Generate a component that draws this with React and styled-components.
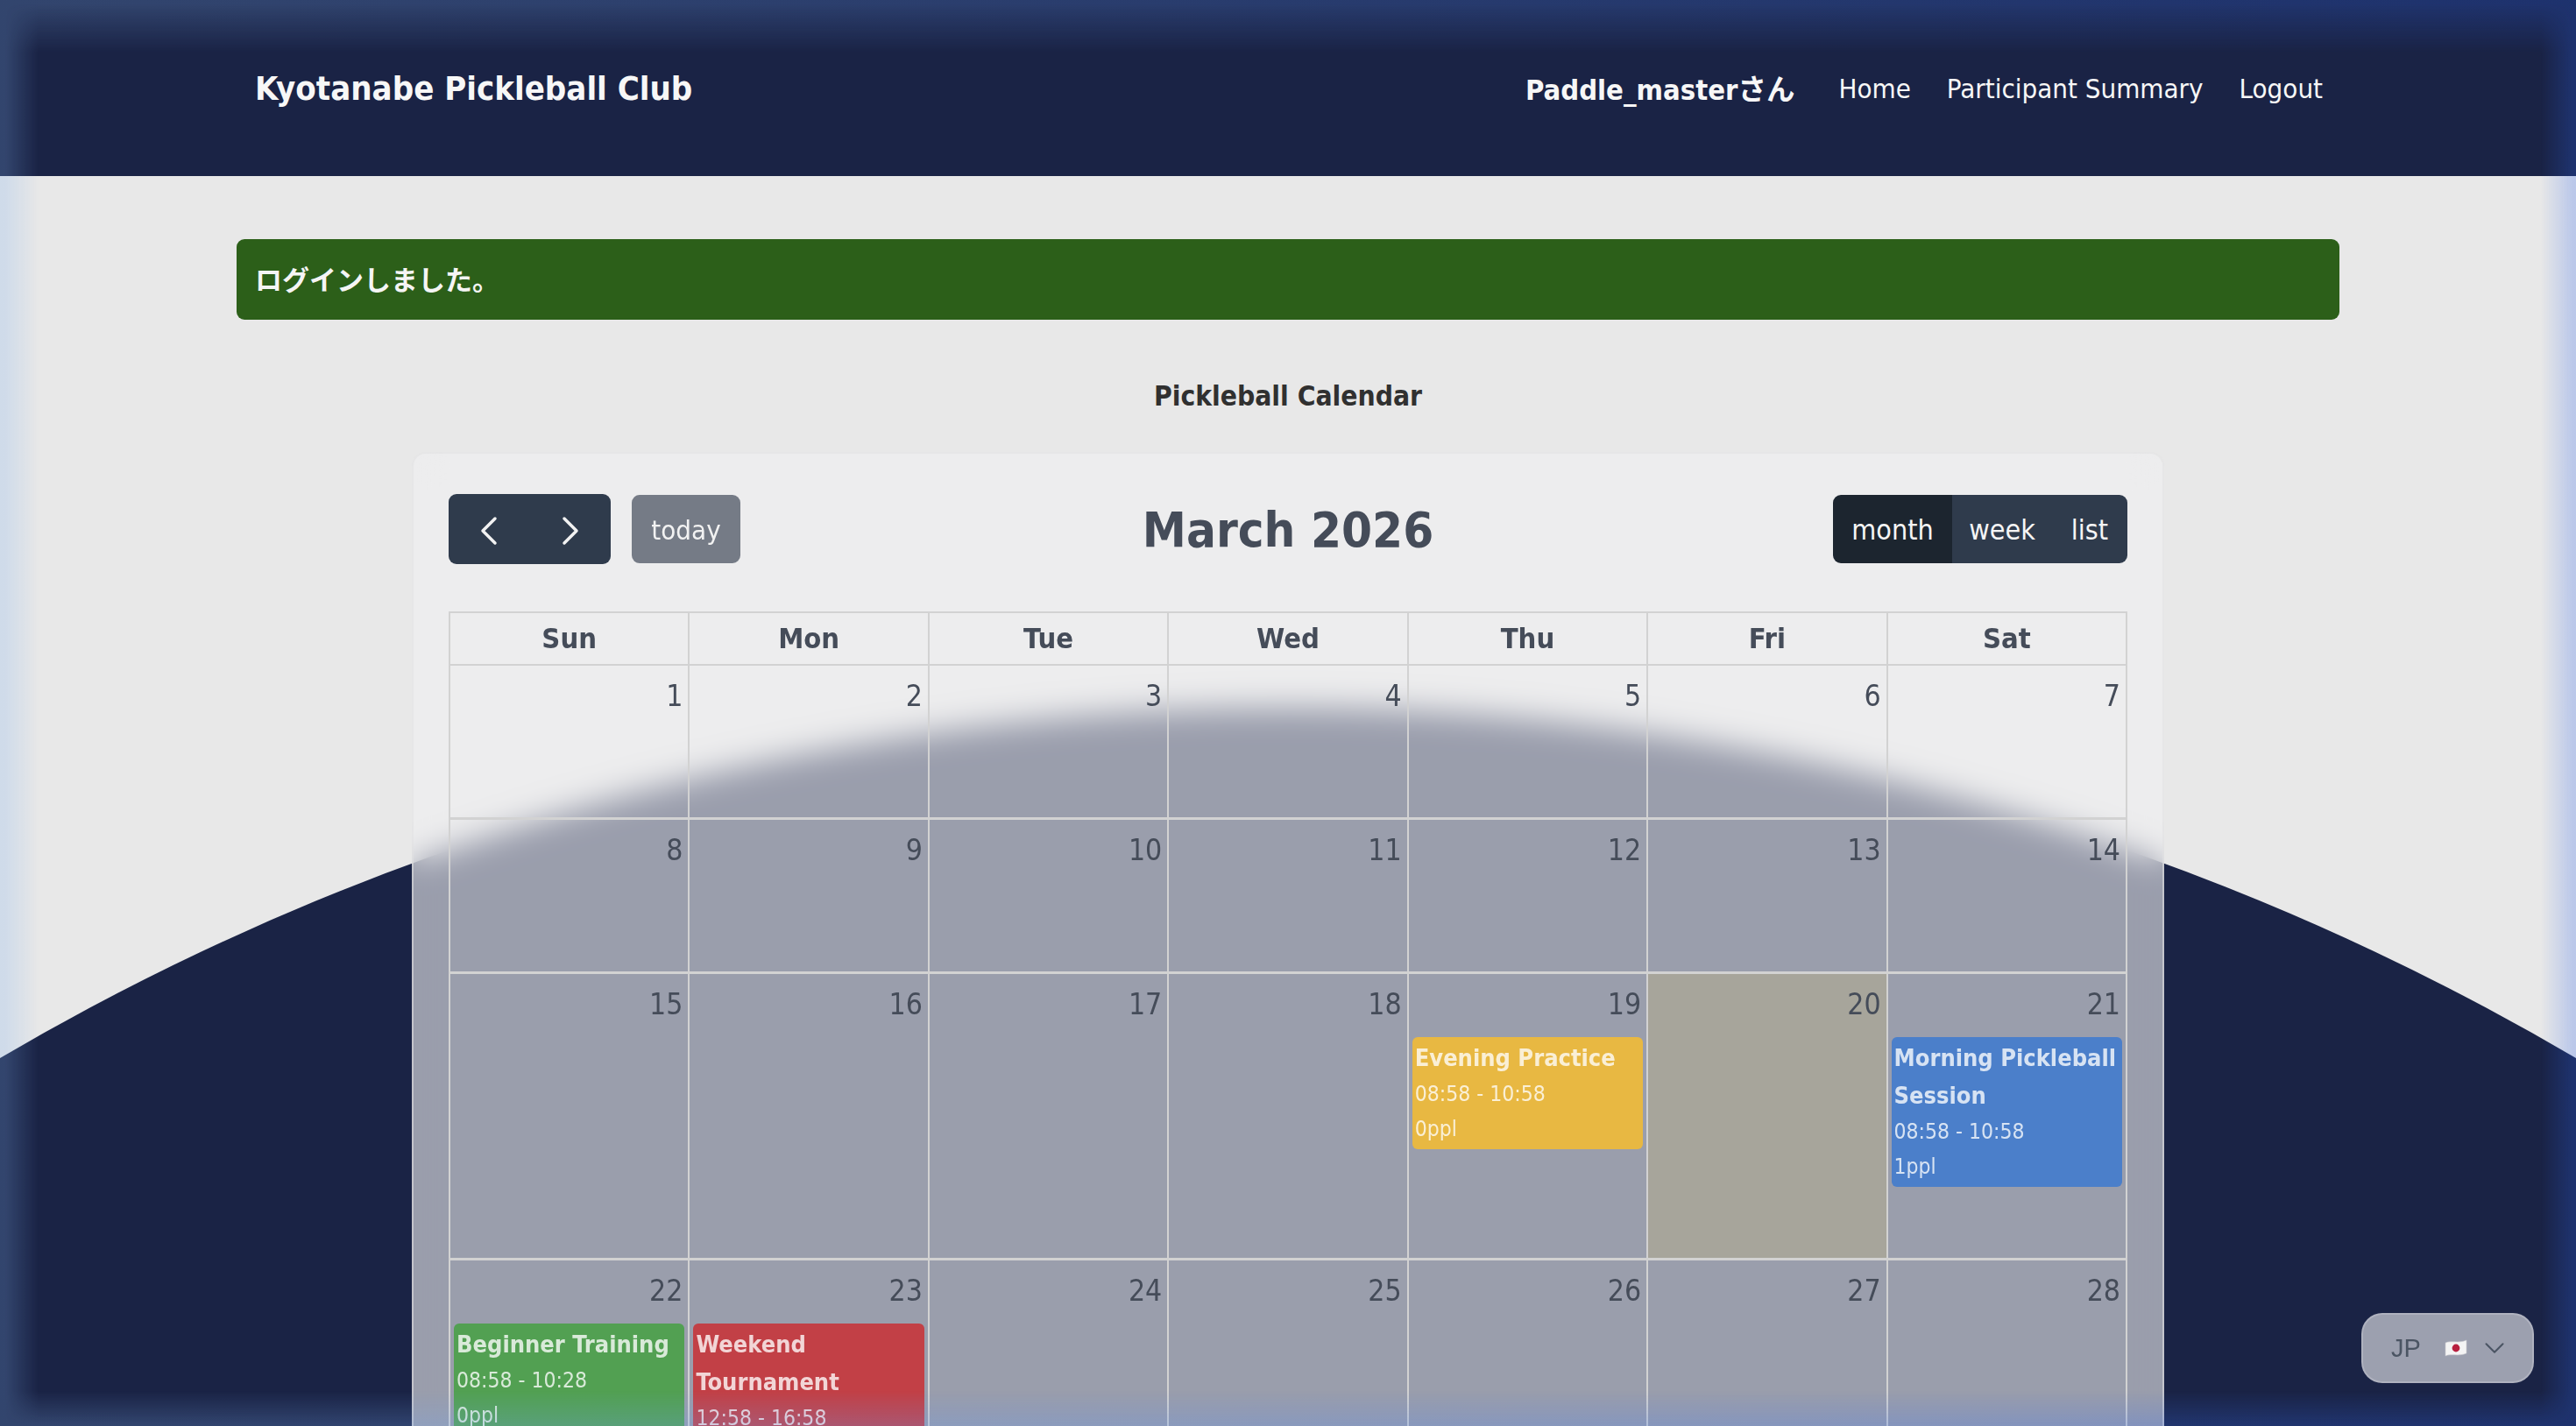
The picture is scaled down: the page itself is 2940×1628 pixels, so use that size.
import React from "react"
import styled, { createGlobalStyle } from "styled-components"
import { ChevronLeft, ChevronRight, ChevronDown } from "lucide-react"

const FONT = `"DejaVu Sans Condensed", "DejaVu Sans", "Noto Sans CJK JP", sans-serif`

const GlobalStyle = createGlobalStyle`
  html, body {
    margin: 0;
    padding: 0;
    background: #e8e8e8;
    font-family: ${FONT};
    font-stretch: condensed;
  }
  * {
    box-sizing: border-box;
  }
`

const Page = styled.div`
  position: relative;
  height: 100vh;
  overflow: hidden;
  background: #e8e8e8;
`

const BigCircle = styled.div`
  position: absolute;
  left: 50%;
  top: 808px;
  width: 5802px;
  height: 5802px;
  margin-left: -2901px;
  border-radius: 50%;
  background: #1a2345;
`

const EdgeGlow = styled.div`
  position: absolute;
  inset: 0;
  z-index: 5;
  pointer-events: none;
  background: linear-gradient(90deg, rgba(130, 180, 240, 0.24), rgba(45, 100, 240, 0.24));
  mask-image: linear-gradient(to right, #000 6px, transparent 44px, transparent calc(100% - 40px), #000 calc(100% - 4px)),
    linear-gradient(to bottom, #000 4px, transparent 60px, transparent calc(100% - 40px), #000 calc(100% - 2px));
  mask-composite: add;
`

const Content = styled.div`
  position: relative;
  z-index: 1;
`

const NavBar = styled.nav`
  height: 201px;
  background: #1a2345;
  padding: 0 289px 0 291px;
  display: flex;
  align-items: center;
  justify-content: space-between;
  color: #f7f7f7;
`

const Brand = styled.a`
  font-size: 38px;
  font-weight: 700;
`

const NavLinks = styled.div`
  display: flex;
  align-items: center;
  gap: 41px;
  font-size: 31px;
`

const UserName = styled.span`
  padding-bottom: 3px;
  font-size: 32.5px;
  font-weight: 700;
  margin-right: 9px;
`

const NavLink = styled.a`
  color: #f7f7f7;
`

const Main = styled.main`
  width: 2400px;
  margin: 72px auto 0;
`

const Alert = styled.div`
  height: 92px;
  padding: 0 0 4px 21px;
  display: flex;
  align-items: center;
  background: #2c5f19;
  border-radius: 9px;
  color: #f5f5f5;
  font-size: 31px;
  font-weight: 700;
`

const PageTitle = styled.h1`
  margin: 64px 0 41px;
  text-align: center;
  font-size: 31.5px;
  line-height: 46px;
  font-weight: 700;
  color: #303030;
`

const Card = styled.section`
  width: 2000px;
  margin: 0 auto;
  padding: 46px 40px 0;
  background: rgba(240, 240, 241, 0.6);
  border: 2px solid rgba(225, 225, 225, 0.6);
  border-radius: 16px;
  backdrop-filter: blur(18px);
`

const Toolbar = styled.div`
  height: 80px;
  margin-bottom: 54px;
  display: flex;
  align-items: center;
  justify-content: space-between;
`

const ToolGroup = styled.div`
  width: 400px;
  display: flex;
  align-items: center;
  gap: 24px;
  justify-content: ${(p) => (p.$end ? "flex-end" : "flex-start")};
`

const ArrowGroup = styled.div`
  width: 185px;
  height: 80px;
  padding-top: 3px;
  display: grid;
  grid-template-columns: 1fr 1fr;
  place-items: center;
  background: #2f3b4c;
  border-radius: 9px;
  color: #f2f2f2;
`

const TodayButton = styled.button`
  width: 124px;
  height: 78px;
  border: 0;
  padding: 2px 0 0;
  border-radius: 9px;
  background: #757b86;
  color: #f2f2f2;
  font: inherit;
  font-size: 31px;
`

const MonthTitle = styled.h2`
  margin: 0;
  font-size: 56px;
  font-weight: 700;
  color: #454c59;
`

const ViewGroup = styled.div`
  display: flex;
  height: 78px;
  border-radius: 9px;
  overflow: hidden;
`

const ViewButton = styled.button`
  width: ${(p) => p.$width}px;
  border: 0;
  padding: 2px 0 0;
  background: ${(p) => (p.$active ? "#1c252f" : "#2f3b4c")};
  color: #f5f5f5;
  font: inherit;
  font-size: 32px;
`

const Grid = styled.div`
  display: grid;
  grid-template-columns: repeat(7, 1fr);
  border-top: 2px solid #d2d2d2;
  border-left: 2px solid #d2d2d2;
`

const HeadCell = styled.div`
  height: 60px;
  display: flex;
  align-items: center;
  justify-content: center;
  border-right: 2px solid #d2d2d2;
  border-bottom: 2px solid #d2d2d2;
  color: #454c59;
  font-size: 32.5px;
  font-weight: 700;
`

const DayCell = styled.div`
  min-height: 176px;
  padding: 0 4px 81px;
  border-right: 2px solid #d2d2d2;
  border-bottom: 3px solid #d2d2d2;
  background: ${(p) => (p.$today ? "rgba(255, 220, 40, 0.13)" : "transparent")};
`

const DayNumber = styled.div`
  height: 72px;
  padding: 16px 2px 0 0;
  text-align: right;
  color: #454c59;
  font-size: 33.5px;
  line-height: 38px;
`

const Event = styled.div`
  padding: 2px 3px 3px;
  border-radius: 6px;
  background: ${(p) => p.$color};
  color: rgba(255, 255, 255, 0.78);
`

const EventTitle = styled.div`
  font-size: 27px;
  line-height: 43px;
  font-weight: 700;
`

const EventLine = styled.div`
  font-size: 24.5px;
  line-height: 40px;
`

const LangSelect = styled.div`
  position: absolute;
  z-index: 6;
  left: 2695px;
  top: 1499px;
  width: 197px;
  height: 80px;
  padding-left: 32px;
  display: flex;
  align-items: center;
  background: rgba(243, 244, 246, 0.6);
  border: 2px solid rgba(255, 255, 255, 0.2);
  border-radius: 24px;
  color: #4b5563;
  font-family: "Liberation Sans", sans-serif;
  font-stretch: normal;
  font-size: 29px;
`

const FlagIcon = styled.svg`
  margin: 0 12px 0 27px;
`

const DAY_NAMES = ["Sun", "Mon", "Tue", "Wed", "Thu", "Fri", "Sat"]

const EVENTS = {
  19: { color: "#e8b842", title: "Evening Practice", lines: ["08:58 - 10:58", "0ppl"] },
  21: { color: "#4b7fca", title: "Morning Pickleball Session", lines: ["08:58 - 10:58", "1ppl"] },
  22: { color: "#52a052", title: "Beginner Training", lines: ["08:58 - 10:28", "0ppl"] },
  23: { color: "#c24046", title: "Weekend Tournament", lines: ["12:58 - 16:58"] },
}

const VIEWS = [
  { label: "month", width: 136, active: true },
  { label: "week", width: 114 },
  { label: "list", width: 86 },
]

const TODAY = 20
const days = Array.from({ length: 28 }, (_, i) => i + 1)

const JapanFlag = () => (
  <FlagIcon width="26" height="20" viewBox="0 0 26 20">
    <path d="M1 4 C8 1 16 5 25 1 V16 C16 20 8 16 1 19 Z" fill="#f4f4f4" stroke="#c9c9cf" strokeWidth="0.6" />
    <circle cx="13" cy="10" r="4.4" fill="#b8203f" />
  </FlagIcon>
)

export default function App() {
  return (
    <Page>
      <GlobalStyle />
      <BigCircle />
      <Content>
        <NavBar>
          <Brand>Kyotanabe Pickleball Club</Brand>
          <NavLinks>
            <UserName>Paddle_masterさん</UserName>
            <NavLink>Home</NavLink>
            <NavLink>Participant Summary</NavLink>
            <NavLink>Logout</NavLink>
          </NavLinks>
        </NavBar>
        <Main>
          <Alert>ログインしました。</Alert>
          <PageTitle>Pickleball Calendar</PageTitle>
          <Card>
            <Toolbar>
              <ToolGroup>
                <ArrowGroup>
                  <ChevronLeft size={56} strokeWidth={1.5} />
                  <ChevronRight size={56} strokeWidth={1.5} />
                </ArrowGroup>
                <TodayButton>today</TodayButton>
              </ToolGroup>
              <MonthTitle>March 2026</MonthTitle>
              <ToolGroup $end>
                <ViewGroup>
                  {VIEWS.map((view) => (
                    <ViewButton key={view.label} $active={view.active} $width={view.width}>
                      {view.label}
                    </ViewButton>
                  ))}
                </ViewGroup>
              </ToolGroup>
            </Toolbar>
            <Grid>
              {DAY_NAMES.map((name) => (
                <HeadCell key={name}>{name}</HeadCell>
              ))}
              {days.map((day) => (
                <DayCell key={day} $today={day === TODAY}>
                  <DayNumber>{day}</DayNumber>
                  {EVENTS[day] && (
                    <Event $color={EVENTS[day].color}>
                      <EventTitle>{EVENTS[day].title}</EventTitle>
                      {EVENTS[day].lines.map((line) => (
                        <EventLine key={line}>{line}</EventLine>
                      ))}
                    </Event>
                  )}
                </DayCell>
              ))}
            </Grid>
          </Card>
        </Main>
      </Content>
      <LangSelect>
        JP
        <JapanFlag />
        <ChevronDown size={38} strokeWidth={1.3} />
      </LangSelect>
      <EdgeGlow />
    </Page>
  )
}
